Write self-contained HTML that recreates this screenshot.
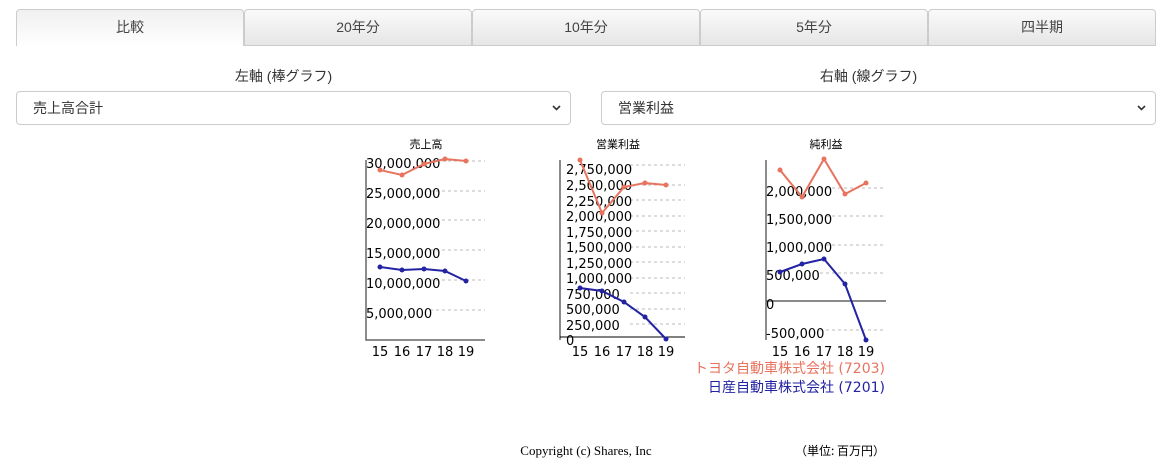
<!DOCTYPE html>
<html><head><meta charset="utf-8"><style>
body{margin:0;width:1173px;height:459px;background:#fff;font-family:"Liberation Sans","Noto Sans CJK JP",sans-serif;position:relative;overflow:hidden;color:#333}
.tab{position:absolute;top:9px;border:1px solid #ccc;border-radius:4px 4px 0 0;background:linear-gradient(#fafafa,#e6e6e6);font-size:14px;text-align:center;line-height:35px;color:#444;box-sizing:border-box;height:37px}
.tab.act{background:linear-gradient(#f0f0f0,#fff);border-bottom:none}
.lab{position:absolute;top:66px;font-size:14px;color:#333;text-align:center;width:555px}
.sel{position:absolute;top:91px;height:34px;border:1px solid #ccc;border-radius:4px;box-sizing:border-box;font-size:14px;line-height:32px;padding-left:16px;color:#333;width:555px}
.sel svg{position:absolute;right:9px;top:13px}
</style></head><body>
<div class="tab act" style="left:16px;width:228px">比較</div>
<div class="tab" style="left:244px;width:228px">20年分</div>
<div class="tab" style="left:472px;width:228px">10年分</div>
<div class="tab" style="left:700px;width:228px">5年分</div>
<div class="tab" style="left:928px;width:228px">四半期</div>
<div class="lab" style="left:6px">左軸 (棒グラフ)</div>
<div class="lab" style="left:591px">右軸 (線グラフ)</div>
<div class="sel" style="left:16px">売上高合計<svg width="9" height="6"><path d="M1 1L4.5 4.5L8 1" stroke="#333" stroke-width="1.6" fill="none"/></svg></div>
<div class="sel" style="left:601px">営業利益<svg width="9" height="6"><path d="M1 1L4.5 4.5L8 1" stroke="#333" stroke-width="1.6" fill="none"/></svg></div>
<svg width="1173" height="459" style="position:absolute;left:0;top:0" font-family="DejaVu Sans,sans-serif">
<g font-size="11" text-anchor="middle" fill="#000" font-family="Noto Sans CJK JP,sans-serif"><text x="426" y="148">売上高</text><text x="618" y="148">営業利益</text><text x="826" y="148">純利益</text></g>
<g stroke="#bbb" stroke-dasharray="3,3" stroke-width="1">
<path d="M430 161H485M430 191H485M430 220H485M430 250H485M430 280H485M430 310H485"/>
<path d="M630 165H685M630 185H685M630 200H685M630 216H685M630 231H685M630 247H685M630 262H685M630 278H685M630 293H685M630 309H685M630 324H685"/>
<path d="M820 188H886M820 216H886M820 245H886M820 273H886M820 330H886"/>
</g>
<g stroke="#666" stroke-width="1.5" fill="none">
<path d="M366 160V340H485"/><path d="M560 160V340"/><path d="M766 160V340"/>
</g>
<path d="M560 337H685" stroke="#000"/><path d="M766 301H886" stroke="#444" stroke-width="1.3"/>
<g font-size="13" fill="#000">
<text x="366" y="168">30,000,000</text><text x="366" y="198">25,000,000</text><text x="366" y="228">20,000,000</text><text x="366" y="258">15,000,000</text><text x="366" y="288">10,000,000</text><text x="366" y="318">5,000,000</text>
<text x="566" y="174">2,750,000</text><text x="566" y="190">2,500,000</text><text x="566" y="206">2,250,000</text><text x="566" y="221">2,000,000</text><text x="566" y="237">1,750,000</text><text x="566" y="252">1,500,000</text><text x="566" y="268">1,250,000</text><text x="566" y="283">1,000,000</text><text x="566" y="299">750,000</text><text x="566" y="314">500,000</text><text x="566" y="330">250,000</text><text x="566" y="345">0</text>
<text x="766" y="196">2,000,000</text><text x="766" y="224">1,500,000</text><text x="766" y="252">1,000,000</text><text x="766" y="280">500,000</text><text x="766" y="309">0</text><text x="766" y="338">-500,000</text>
</g>
<g font-size="13" fill="#000" text-anchor="middle">
<text x="380" y="356">15</text><text x="402" y="356">16</text><text x="424" y="356">17</text><text x="445" y="356">18</text><text x="466" y="356">19</text>
<text x="580" y="356">15</text><text x="602" y="356">16</text><text x="624" y="356">17</text><text x="645" y="356">18</text><text x="666" y="356">19</text>
<text x="780" y="356">15</text><text x="802" y="356">16</text><text x="824" y="356">17</text><text x="845" y="356">18</text><text x="866" y="356">19</text>
</g>
<g fill="none" stroke-width="2">
<path stroke="#e8735f" d="M380 170L402 175L424 164L445 159L466 161"/>
<path stroke="#2323a3" d="M380 267L402 270L424 269L445 271L466 281"/>
<path stroke="#e8735f" d="M580 160L602 213L624 187L645 183L666 185"/>
<path stroke="#2323a3" d="M580 288L602 291L624 302L645 317L666 339"/>
<path stroke="#e8735f" d="M780 170L802 197L824 159L845 194L866 183"/>
<path stroke="#2323a3" d="M780 272L802 264L824 259L845 284L866 340"/>
</g>
<g fill="#e8735f"><circle cx="380" cy="170" r="2.5"/><circle cx="402" cy="175" r="2.5"/><circle cx="424" cy="164" r="2.5"/><circle cx="445" cy="159" r="2.5"/><circle cx="466" cy="161" r="2.5"/>
<circle cx="580" cy="160" r="2.5"/><circle cx="602" cy="213" r="2.5"/><circle cx="624" cy="187" r="2.5"/><circle cx="645" cy="183" r="2.5"/><circle cx="666" cy="185" r="2.5"/>
<circle cx="780" cy="170" r="2.5"/><circle cx="802" cy="197" r="2.5"/><circle cx="824" cy="159" r="2.5"/><circle cx="845" cy="194" r="2.5"/><circle cx="866" cy="183" r="2.5"/></g>
<g fill="#2323a3"><circle cx="380" cy="267" r="2.5"/><circle cx="402" cy="270" r="2.5"/><circle cx="424" cy="269" r="2.5"/><circle cx="445" cy="271" r="2.5"/><circle cx="466" cy="281" r="2.5"/>
<circle cx="580" cy="288" r="2.5"/><circle cx="602" cy="291" r="2.5"/><circle cx="624" cy="302" r="2.5"/><circle cx="645" cy="317" r="2.5"/><circle cx="666" cy="339" r="2.5"/>
<circle cx="780" cy="272" r="2.5"/><circle cx="802" cy="264" r="2.5"/><circle cx="824" cy="259" r="2.5"/><circle cx="845" cy="284" r="2.5"/><circle cx="866" cy="340" r="2.5"/></g>
<g font-size="14" text-anchor="end" font-family="DejaVu Sans,Noto Sans CJK JP,sans-serif">
<text x="885" y="373" fill="#e8735f">トヨタ自動車株式会社 (7203)</text>
<text x="885" y="392" fill="#2323a3">日産自動車株式会社 (7201)</text>
</g>
<text x="586" y="455" font-size="13" text-anchor="middle" font-family="Liberation Serif,serif" fill="#000">Copyright (c) Shares, Inc</text>
<text x="885" y="455" font-size="12" text-anchor="end" font-family="Noto Sans CJK JP,sans-serif" fill="#000">（単位: 百万円）</text>
</svg>
</body></html>
